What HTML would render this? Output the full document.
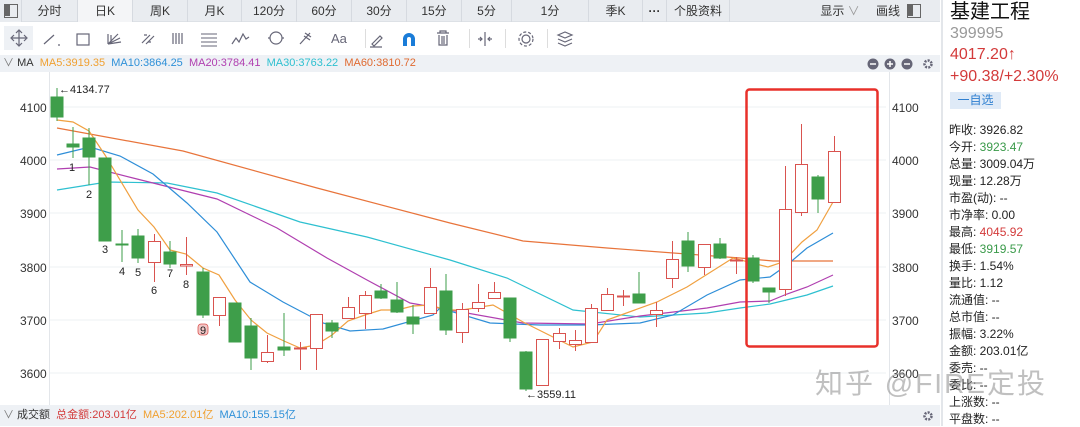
<!DOCTYPE html>
<html><head><meta charset="utf-8"><style>
*{margin:0;padding:0;box-sizing:border-box}
body{width:1080px;height:426px;overflow:hidden;background:#fff;font-family:"Liberation Sans","Noto Sans CJK SC",sans-serif;position:relative;color:#333}
.tabs{position:absolute;left:0;top:0;width:940px;height:22px;background:#e9ecf0;border-bottom:1px solid #dde1e6}
.tab{position:absolute;top:0;height:22px;line-height:22px;font-size:12px;text-align:center;color:#333;border-right:1px solid #d6dae0}
.tb{position:absolute;left:0;top:22px;width:940px;height:33px;background:#fff}
.mab{position:absolute;left:0;top:55px;width:940px;height:17px;background:#eef1f5;font-size:11px;line-height:17px}
.bot{position:absolute;left:0;top:405px;width:940px;height:21px;background:#eef1f5;font-size:11px;line-height:21px}
.rp{position:absolute;left:941px;top:0;width:139px;height:426px;border-left:2px solid #e3e6ea;background:#fff}
.rp .l{position:absolute;left:6px;font-size:12px;color:#222;white-space:nowrap}
.g{color:#3a9a4a}.r{color:#d33a3a}
</style></head><body>
<div class="tabs">
<div class="tab" style="left:0;width:22px;background:#e9ecf0"><div style="position:absolute;left:4px;top:4px;width:14px;height:14px;border:1.5px solid #666;"><div style="width:5px;height:11px;background:#666"></div></div></div>
<div class="tab" style="left:22px;width:56px">分时</div>
<div class="tab" style="left:78px;width:55px;background:#f4f5f7">日K</div>
<div class="tab" style="left:133px;width:55px">周K</div>
<div class="tab" style="left:188px;width:54px">月K</div>
<div class="tab" style="left:242px;width:55px">120分</div>
<div class="tab" style="left:297px;width:55px">60分</div>
<div class="tab" style="left:352px;width:55px">30分</div>
<div class="tab" style="left:407px;width:55px">15分</div>
<div class="tab" style="left:462px;width:50px">5分</div>
<div class="tab" style="left:512px;width:77px">1分</div>
<div class="tab" style="left:589px;width:54px">季K</div>
<div class="tab" style="left:643px;width:24px;font-weight:bold">···</div>
<div class="tab" style="left:667px;width:63px">个股资料</div>
<div class="tab" style="left:815px;width:50px;border:none">显示 <span style="color:#999">∨</span></div>
<div class="tab" style="left:868px;width:40px;border:none">画线</div>
<div style="position:absolute;left:907px;top:4px;width:14px;height:14px;border:1.5px solid #666"><div style="width:5px;height:11px;background:#666"></div></div>
</div>
<div class="tb">
<div style="position:absolute;left:4px;top:4px;width:29px;height:24px;background:#eef1f5"></div>
<svg width="940" height="33" style="position:absolute;left:0;top:0" fill="none" stroke="#667" stroke-width="1.2">
<path d="M12 16h14M19 9v14M16 11l3-3 3 3M16 21l3 3 3-3M14 13l-3 3 3 3M24 13l3 3-3 3"/>
<path d="M44 22l10-9M58 23h2"/>
<rect x="77" y="12" width="12" height="11"/>
<path d="M108 22l10-10M108 22l12-6M108 22l13-2M108 22v-10M111 22v-9"/>
<path d="M142 21l8-8M146 22l8-8M144 13h3M148 20h3"/>
<path d="M173 11v11M176 11v11M179 11v11M182 11v11"/>
<path d="M201 12h16M201 16h16M201 20h16M201 24h16" stroke-width="1"/>
<path d="M232 22l4-6 3 4 4-8 3 5 3-2"/>
<ellipse cx="276" cy="16" rx="6" ry="6"/><path d="M268 16h2M282 16h2"/>
<path d="M300 22l10-11M304 14l6 4M305 11l6 4"/>
<text x="331" y="21" font-size="13" fill="#667" stroke="none" font-family="Liberation Sans">Aa</text>
<path d="M372 22l8-8 2 2-8 8zM370 25h12"/>
<path d="M403 24v-7a6 6 0 0 1 12 0v7h-4v-7a2 2 0 0 0-4 0v7z" fill="#1a7cd8" stroke="none"/>
<path d="M437 11h12M440 11v-2h6v2M439 13v10h8v-10M442 14v8M444 14v8"/>
<path d="M485 10v14M478 17h4M488 17h4M480 15l2 2-2 2M490 15l-2 2 2 2"/>
<circle cx="526" cy="17" r="4"/><circle cx="526" cy="17" r="7" stroke-dasharray="3 2"/>
<path d="M558 13l7-3 7 3-7 3zM558 17l7 3 7-3M558 21l7 3 7-3"/>
</svg>
<div style="position:absolute;left:365px;top:7px;width:1px;height:19px;background:#ddd"></div>
<div style="position:absolute;left:469px;top:7px;width:1px;height:19px;background:#ddd"></div>
<div style="position:absolute;left:505px;top:7px;width:1px;height:19px;background:#ddd"></div>
<div style="position:absolute;left:547px;top:7px;width:1px;height:19px;background:#ddd"></div>
</div>
<div class="mab"><span style="margin-left:3px;color:#777">∨</span> <span style="color:#333">MA</span>&nbsp; <span style="color:#f0a030">MA5:3919.35</span>&nbsp; <span style="color:#2e90d8">MA10:3864.25</span>&nbsp; <span style="color:#b03fb0">MA20:3784.41</span>&nbsp; <span style="color:#2ec0d0">MA30:3763.22</span>&nbsp; <span style="color:#e06a30">MA60:3810.72</span>
<svg style="position:absolute;left:866px;top:2px" width="72" height="14"><circle cx="7" cy="7" r="5.5" fill="#667"/><path d="M4 7h6" stroke="#fff" stroke-width="1.5"/><circle cx="24" cy="7" r="5.5" fill="#667"/><path d="M21 7h6M24 4v6" stroke="#fff" stroke-width="1.5"/><circle cx="41" cy="7" r="5.5" fill="#667"/><path d="M38 7h6" stroke="#fff" stroke-width="1.5"/><circle cx="62" cy="7" r="3.5" fill="none" stroke="#667" stroke-width="2.5" stroke-dasharray="2 1.2"/></svg>
</div>
<svg width="940" height="333" style="position:absolute;left:0;top:72px">
<g transform="translate(0,-72)">
<g stroke="#eef0f3" stroke-width="1"><path d="M49 107H886M49 160H886M49 213H886M49 267H886M49 320H886M49 373H886"/></g>
<path d="M49.5 72V405M889.5 72V405" stroke="#e3e6ea"/>
<g fill="none" stroke-width="1.2">
<polyline stroke="#e8743b" points="57,128 183,151 317,188 450,223 523,241 607,248 740,258 773,261 833,261"/>
<polyline stroke="#2ec0d0" points="57,190 107,182 167,183 217,193 300,222 367,237 450,260 507,278 573,310 640,317 707,313 740,308 770,304 807,295 833,286"/>
<polyline stroke="#b03fb0" points="57,169 90,167 133,178 217,199 277,228 327,258 367,280 410,303 450,310 523,323 590,324 640,316 707,308 740,302 770,301 787,294 807,287 833,275"/>
<polyline stroke="#2e8ed8" points="57,155 90,147 120,156 153,174 187,203 217,232 250,282 283,302 323,323 350,331 383,329 433,315 440,308 490,323 540,325 590,325 640,323 673,315 707,295 740,280 770,277 787,265 807,248 833,233"/>
<polyline stroke="#f0a040" points="57,120 73,122 89,131 105,155 138,210 154,227 170,250 186,254 203,268 219,275 235,300 251,320 267,333 284,341 300,348 316,345 332,335 348,321 365,315 381,310 397,310 413,306 430,305 446,310 462,310 493,305 523,322 573,347 593,342 607,320 657,302 687,287 733,258 768,267 783,262 802,242 817,230 833,202"/>
</g>
<g stroke="#3e9e4a" fill="#3e9e4a">
<path d="M57 88V121M73 127V158M89 128V185M122 230V262M138 229V263M170 241V268M203 268V318M251 318V370M284 313V356M332 320V338M381 284V299M397 282V313M413 305V334M446 274V335M510 298V342M526 351V391M639 272V303M688 232V272M720 238V259M753 255V283M769 288V303M818 175V213"/>
<rect x="51" y="97" width="12" height="20"/><rect x="67" y="144" width="12" height="3"/><rect x="83" y="138" width="12" height="19"/><rect x="99" y="158" width="12" height="83"/><rect x="116" y="244" width="12" height="1"/><rect x="132" y="236" width="12" height="22"/><rect x="164" y="252" width="12" height="12"/><rect x="197" y="272" width="12" height="43"/><rect x="229" y="303" width="12" height="39"/><rect x="245" y="326" width="12" height="32"/><rect x="278" y="347" width="12" height="3"/><rect x="326" y="323" width="12" height="8"/><rect x="375" y="291" width="12" height="7"/><rect x="391" y="300" width="12" height="12"/><rect x="407" y="317" width="12" height="7"/><rect x="440" y="291" width="12" height="39"/><rect x="504" y="298" width="12" height="40"/><rect x="520" y="352" width="12" height="37"/><rect x="633" y="294" width="12" height="9"/><rect x="682" y="241" width="12" height="25"/><rect x="714" y="244" width="12" height="14"/><rect x="747" y="258" width="12" height="23"/><rect x="763" y="288" width="12" height="4"/><rect x="812" y="177" width="12" height="22"/>
</g>
<g stroke="#d9534f" fill="#fff" stroke-width="1">
<path d="M154.5 234V282M186.5 237V275M219.5 297V326M267.5 335V363M300.5 342V370M316.5 314V370M348.5 297V318M365.5 291V329M430.5 268V314M462.5 303V343M478.5 284V312M494.5 282V298M542.5 339V385M559.5 328V349M575.5 330V351M591.5 304V342M607.5 288V310M623.5 290V306M656.5 302V327M672.5 241V288M704.5 244V275M736.5 257V274M785.5 166V296M801.5 124V216M834.5 136V202"/>
<rect x="148.5" y="241.5" width="12" height="21"/><rect x="180.5" y="264.5" width="12" height="1.5"/><rect x="213.5" y="297.5" width="12" height="18"/><rect x="261.5" y="352.5" width="12" height="9"/><rect x="294.5" y="348" width="12" height="1"/><rect x="310.5" y="314.5" width="12" height="34"/><rect x="342.5" y="307.5" width="12" height="11"/><rect x="359.5" y="295.5" width="12" height="18"/><rect x="424.5" y="287.5" width="12" height="26"/><rect x="456.5" y="309.5" width="12" height="23"/><rect x="472.5" y="302.5" width="12" height="6"/><rect x="488.5" y="292.5" width="12" height="6"/><rect x="536.5" y="339.5" width="12" height="46"/><rect x="553.5" y="333.5" width="12" height="8"/><rect x="569.5" y="340.5" width="12" height="4"/><rect x="585.5" y="308.5" width="12" height="34"/><rect x="601.5" y="294.5" width="12" height="16"/><rect x="617.5" y="296" width="12" height="1"/><rect x="650.5" y="310.5" width="12" height="4"/><rect x="666.5" y="259.5" width="12" height="19"/><rect x="698.5" y="244.5" width="12" height="23"/><rect x="730.5" y="260" width="12" height="1"/><rect x="779.5" y="209.5" width="12" height="80"/><rect x="795.5" y="164.5" width="12" height="48"/><rect x="828.5" y="151.5" width="12" height="51"/>
</g>
<rect x="746.5" y="89.5" width="131" height="257" rx="3" fill="none" stroke="#e8302a" stroke-width="2.5"/>
<g font-size="11" fill="#222" font-family="Liberation Sans">
<text x="59" y="93">←4134.77</text><text x="526" y="398">←3559.11</text>
<text x="69" y="171">1</text><text x="86" y="198">2</text><text x="102" y="253">3</text><text x="119" y="275">4</text><text x="135" y="276">5</text><text x="151" y="294">6</text><text x="167" y="277">7</text><text x="183" y="288">8</text>
<rect x="198" y="324" width="10" height="11" rx="3" fill="#f2c6c6" stroke="#d9534f" stroke-width="0.8"/><text x="200" y="334">9</text>
<g font-size="12" fill="#333"><text x="20" y="112">4100</text><text x="20" y="165">4000</text><text x="20" y="218">3900</text><text x="20" y="272">3800</text><text x="20" y="325">3700</text><text x="20" y="378">3600</text>
<text x="892" y="112">4100</text><text x="892" y="165">4000</text><text x="892" y="218">3900</text><text x="892" y="272">3800</text><text x="892" y="325">3700</text><text x="892" y="378">3600</text></g>
</g>
</g></svg>
<div class="bot"><span style="margin-left:3px;color:#777">∨</span> 成交额&nbsp; <span style="color:#d33a3a">总金额:203.01亿</span>&nbsp; <span style="color:#f0a030">MA5:202.01亿</span>&nbsp; <span style="color:#2e90d8">MA10:155.15亿</span>
<svg style="position:absolute;left:922px;top:5px" width="12" height="12"><circle cx="6" cy="6" r="3.5" fill="none" stroke="#667" stroke-width="2.5" stroke-dasharray="2 1.2"/></svg></div>
<div class="rp">
<div style="position:absolute;left:7px;top:-1px;font-size:20px;color:#111;line-height:26px">基建工程</div>
<div style="position:absolute;left:7px;top:24px;font-size:16px;color:#999;line-height:20px">399995</div>
<div style="position:absolute;left:7px;top:45px;font-size:16px;color:#d33a3a;line-height:20px">4017.20↑</div>
<div style="position:absolute;left:7px;top:67px;font-size:16px;color:#d33a3a;line-height:20px">+90.38/+2.30%</div>
<div style="position:absolute;left:7px;top:92px;width:51px;height:17px;background:#dfeaf7;color:#2e7fd0;font-size:12px;line-height:17px;text-align:center">一自选</div>
<div class="l" style="top:121px">昨收: 3926.82</div>
<div class="l" style="top:138px">今开: <span class="g">3923.47</span></div>
<div class="l" style="top:155px">总量: 3009.04万</div>
<div class="l" style="top:172px">现量: 12.28万</div>
<div class="l" style="top:189px">市盈(动): --</div>
<div class="l" style="top:206px">市净率: 0.00</div>
<div class="l" style="top:223px">最高: <span class="r">4045.92</span></div>
<div class="l" style="top:240px">最低: <span class="g">3919.57</span></div>
<div class="l" style="top:257px">换手: 1.54%</div>
<div class="l" style="top:274px">量比: 1.12</div>
<div class="l" style="top:291px">流通值: --</div>
<div class="l" style="top:308px">总市值: --</div>
<div class="l" style="top:325px">振幅: 3.22%</div>
<div class="l" style="top:342px">金额: 203.01亿</div>
<div class="l" style="top:359px">委売: --</div>
<div class="l" style="top:376px">委比: --</div>
<div class="l" style="top:393px">上涨数: --</div>
<div class="l" style="top:410px">平盘数: --</div>
</div>
<div style="position:absolute;left:815px;top:362px;font-size:28px;letter-spacing:2px;color:rgba(150,150,150,0.6);white-space:nowrap;z-index:5">知乎 @FIRE定投</div>
</body></html>
